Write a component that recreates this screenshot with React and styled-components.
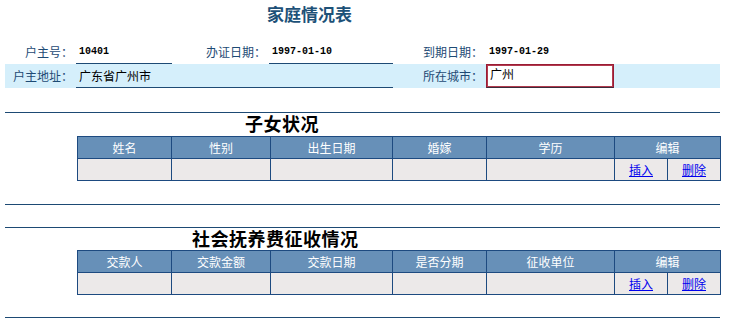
import React from "react";
import styled, { createGlobalStyle } from "styled-components";

const GlobalStyle = createGlobalStyle`
  body {
    margin: 0;
    background: #ffffff;
    font-family: "Noto Sans CJK SC", "Liberation Sans", sans-serif;
    font-size: 12px;
  }
`;

const Page = styled.div`
  width: 715px;
  padding: 0 5px;
`;

const Title = styled.h1`
  margin: 0;
  padding: 4px 0 0 262px;
  height: 40px;
  box-sizing: border-box;
  font-size: 17px;
  font-weight: bold;
  line-height: 20px;
  color: #1d5178;
`;

const FormRow = styled.div`
  display: grid;
  grid-template-columns: 68px 96px 91px 124px 87px 128px 1fr;
  column-gap: 3px;
  height: 24px;
  align-items: stretch;
  background: ${(p) => (p.$shaded ? "#d5effb" : "transparent")};
`;

const Label = styled.div`
  display: flex;
  align-items: center;
  justify-content: flex-end;
  color: #1d4a74;
  white-space: nowrap;
  line-height: 14px;
`;

const Value = styled.div`
  display: flex;
  align-items: center;
  padding-left: 3px;
  color: #000;
  border-bottom: ${(p) => (p.$line ? "1px solid #1d4a74" : "none")};
  grid-column: ${(p) => (p.$span ? `span ${p.$span}` : "auto")};
  white-space: nowrap;
  line-height: 14px;
`;

const Num = styled.span`
  font-family: "Liberation Mono", "DejaVu Sans Mono", monospace;
  font-size: 10px;
  font-weight: bold;
`;

const CityInput = styled.div`
  box-sizing: border-box;
  height: 24px;
  border: 1px solid #9a1c34;
  box-shadow: inset 0 0 0 1px #b23a4e;
  border-bottom-color: #3a2a3a;
  background: #fff;
  padding: 2px 0 0 3px;
  line-height: 14px;
  color: #000;
`;

const Rule = styled.div`
  height: 1px;
  background: #1d4a74;
  margin-top: ${(p) => p.$top || 0}px;
`;

const SectionTitle = styled.h2`
  margin: 0;
  height: 22px;
  padding-left: ${(p) => p.$indent}px;
  font-size: 18px;
  font-weight: bold;
  line-height: 20px;
  color: #000;
  letter-spacing: 0.5px;
`;

const Grid = styled.table`
  margin-left: 72px;
  width: 643px;
  border-collapse: collapse;
  table-layout: fixed;
  margin-top: ${(p) => p.$top || 0}px;
`;

const Head = styled.th`
  height: 21px;
  padding: 0;
  background: #6790b8;
  color: #ffffff;
  font-weight: normal;
  font-size: 12px;
  text-align: center;
  border: 1px solid #1d4a80;
`;

const Cell = styled.td`
  height: 21px;
  padding: 0;
  background: #ece9e9;
  text-align: center;
  border: 1px solid #1d4a80;
`;

const Action = styled.a`
  color: #0000ee;
  text-decoration: underline;
  font-size: 12px;
  cursor: pointer;
`;

const widths = [94, 99, 122, 94, 128, 53, 53];

const DataTable = ({ columns, top }) => (
  <Grid $top={top}>
    <colgroup>
      {widths.map((w, i) => (
        <col key={i} style={{ width: w }} />
      ))}
    </colgroup>
    <thead>
      <tr>
        {columns.map((c) => (
          <Head key={c}>{c}</Head>
        ))}
        <Head colSpan={2}>编辑</Head>
      </tr>
    </thead>
    <tbody>
      <tr>
        {columns.map((c) => (
          <Cell key={c} />
        ))}
        <Cell>
          <Action>插入</Action>
        </Cell>
        <Cell>
          <Action>删除</Action>
        </Cell>
      </tr>
    </tbody>
  </Grid>
);

export default function App() {
  return (
    <Page>
      <GlobalStyle />
      <Title>家庭情况表</Title>
      <FormRow>
        <Label>户主号：</Label>
        <Value $line>
          <Num>10401</Num>
        </Value>
        <Label>办证日期：</Label>
        <Value $line>
          <Num>1997-01-10</Num>
        </Value>
        <Label>到期日期：</Label>
        <Value>
          <Num>1997-01-29</Num>
        </Value>
        <div />
      </FormRow>
      <FormRow $shaded>
        <Label>户主地址：</Label>
        <Value $line $span={3}>
          广东省广州市
        </Value>
        <Label>所在城市：</Label>
        <CityInput>广州</CityInput>
        <div />
      </FormRow>

      <Rule $top={24} />
      <SectionTitle $indent={240}>子女状况</SectionTitle>
      <DataTable top={1} columns={["姓名", "性别", "出生日期", "婚嫁", "学历"]} />
      <Rule $top={23} />
      <Rule $top={22} />
      <SectionTitle $indent={187}>社会抚养费征收情况</SectionTitle>
      <DataTable top={0} columns={["交款人", "交款金额", "交款日期", "是否分期", "征收单位"]} />
      <Rule $top={22} />
    </Page>
  );
}
